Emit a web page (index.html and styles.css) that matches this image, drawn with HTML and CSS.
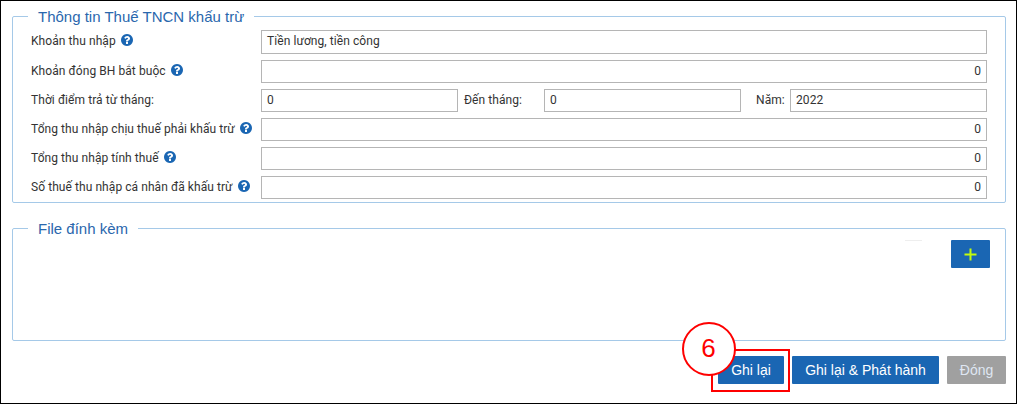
FILE: index.html
```
<!DOCTYPE html>
<html lang="vi">
<head>
<meta charset="utf-8">
<title>Thuế TNCN</title>
<link rel="stylesheet" href="styles.css">
</head>
<body>
<svg class="defs" width="0" height="0">
  <symbol id="help" viewBox="0 0 1536 1536">
    <path d="M896 1248v-192q0-14-9-23t-23-9H672q-14 0-23 9t-9 23v192q0 14 9 23t23 9h192q14 0 23-9t9-23zm256-672q0-88-55.500-163t-138.500-116-170-41q-243 0-371 213-15 24 8 42l132 100q7 6 19 6 16 0 25-12 53-68 86-92 34-24 86-24 48 0 85.500 26t37.500 59q0 38-20 61t-68 45q-63 28-115.500 86.500T640 892v36q0 14 9 23t23 9h192q14 0 23-9t9-23q0-19 21.500-49.500T972 829q32-18 49-28.500t46-35 44.500-48 28-60.500 12.500-81zm384 192q0 209-103 385.500T1153.500 1433 768 1536t-385.500-103T103 1153.500 0 768t103-385.500T382.500 103 768 0t385.500 103T1433 382.500 1536 768z"/>
  </symbol>
</svg>
<main class="frame">
  <fieldset class="group tax">
    <legend class="legend">Thông tin Thuế TNCN khấu trừ</legend>
    <div class="rows">
      <div class="row row-tall"><label class="label">Khoản thu nhập<svg class="help"><use href="#help"/></svg></label><div class="input">Tiền lương, tiền công</div></div>
      <div class="row"><label class="label">Khoản đóng BH bắt buộc<svg class="help"><use href="#help"/></svg></label><div class="input number">0</div></div>
      <div class="row"><label class="label">Thời điểm trả từ tháng:</label><div class="input">0</div><label class="label-to">Đến tháng:</label><div class="input">0</div><label class="label-year">Năm:</label><div class="input">2022</div></div>
      <div class="row"><label class="label">Tổng thu nhập chịu thuế phải khấu trừ<svg class="help"><use href="#help"/></svg></label><div class="input number">0</div></div>
      <div class="row"><label class="label">Tổng thu nhập tính thuế<svg class="help"><use href="#help"/></svg></label><div class="input number">0</div></div>
      <div class="row"><label class="label">Số thuế thu nhập cá nhân đã khấu trừ<svg class="help"><use href="#help"/></svg></label><div class="input number">0</div></div>
    </div>
  </fieldset>
  <fieldset class="group files">
    <legend class="legend">File đính kèm</legend>
    <div class="toolbar">
      <span class="dash"></span>
      <button class="btn add" aria-label="Thêm"><svg width="13" height="13" viewBox="0 0 13 13"><path d="M6.500 .5v12M.5 6.500h12" stroke="#c3fb0c" stroke-width="2"/></svg></button>
    </div>
  </fieldset>
  <div class="actions">
    <div class="marked">
      <button class="btn save">Ghi lại</button>
      <span class="step">6</span>
    </div>
    <button class="btn publish">Ghi lại &amp; Phát hành</button>
    <button class="btn close">Đóng</button>
  </div>
</main>
</body>
</html>
```
FILE: styles.css
```
* { box-sizing: border-box; }
body { margin: 0; background: #fff; }
.defs { display: block; }
.frame {
  width: 1017px;
  height: 404px;
  border: 1px solid #000;
  padding: 6px 10px 0 11px;
  font: 12px/16px Roboto, sans-serif;
  color: #333;
}
.group {
  margin: 0;
  padding: 0;
  min-width: 0;
  border: 1px solid #a5c9e8;
  border-radius: 2px;
}
.tax { height: 196px; }
.files { height: 122px; margin-top: 16px; }
.legend {
  margin-left: 15px;
  padding: 0 10px;
  font: 15px/19px "Liberation Sans", Arial, sans-serif;
  color: #2a67ad;
}
.rows {
  display: flex;
  flex-direction: column;
  gap: 6px;
  padding: 4px 18px 0;
}
.row { display: flex; height: 23px; line-height: 23px; letter-spacing: .07px; }
.row-tall { height: 24px; }
.label {
  display: flex;
  flex: none;
  width: 230px;
  white-space: nowrap;
}
.label-to { width: 86px; padding-left: 6px; flex: none; }
.label-year { width: 49px; padding-left: 15px; flex: none; }
.help { width: 12px; height: 12px; margin: 4px 0 0 5px; fill: #1a66b3; }
.input {
  flex: 1;
  padding: 0 5px;
  border: 1px solid #b5b5b5;
  background: #fff;
  line-height: 21px;
}
.number { text-align: right; }
.toolbar { display: flex; justify-content: flex-end; padding: 2px 15px 0 0; }
.dash { width: 17px; height: 1px; margin-right: 29px; background: #eee; }
.btn {
  display: flex;
  align-items: center;
  justify-content: center;
  height: 28px;
  padding: 0;
  border: 0;
  border-radius: 1px;
  background: #1a66b3;
  color: #fff;
  font: 14px/20px "Liberation Sans", Arial, sans-serif;
}
.add { width: 39px; padding-top: 1px; }
.actions { display: flex; justify-content: flex-end; margin-top: 8px; }
.marked {
  position: relative;
  width: 79px;
  height: 43px;
  margin-right: 2px;
  padding: 5px;
  border: 2px solid #fe0000;
}
.save { width: 66px; }
.publish { width: 147px; margin: 7px 8px 0 0; }
.close { width: 59px; margin-top: 7px; background: #a0a0a0; color: #dfe6f2; }
.step {
  position: absolute;
  left: -31.500px;
  top: -29.500px;
  width: 54px;
  height: 54px;
  border: 2px solid #fe0000;
  border-radius: 50%;
  background: #fff;
  color: #fe0000;
  font: 26px/48px "Liberation Sans", Arial, sans-serif;
  text-align: center;
}
```
